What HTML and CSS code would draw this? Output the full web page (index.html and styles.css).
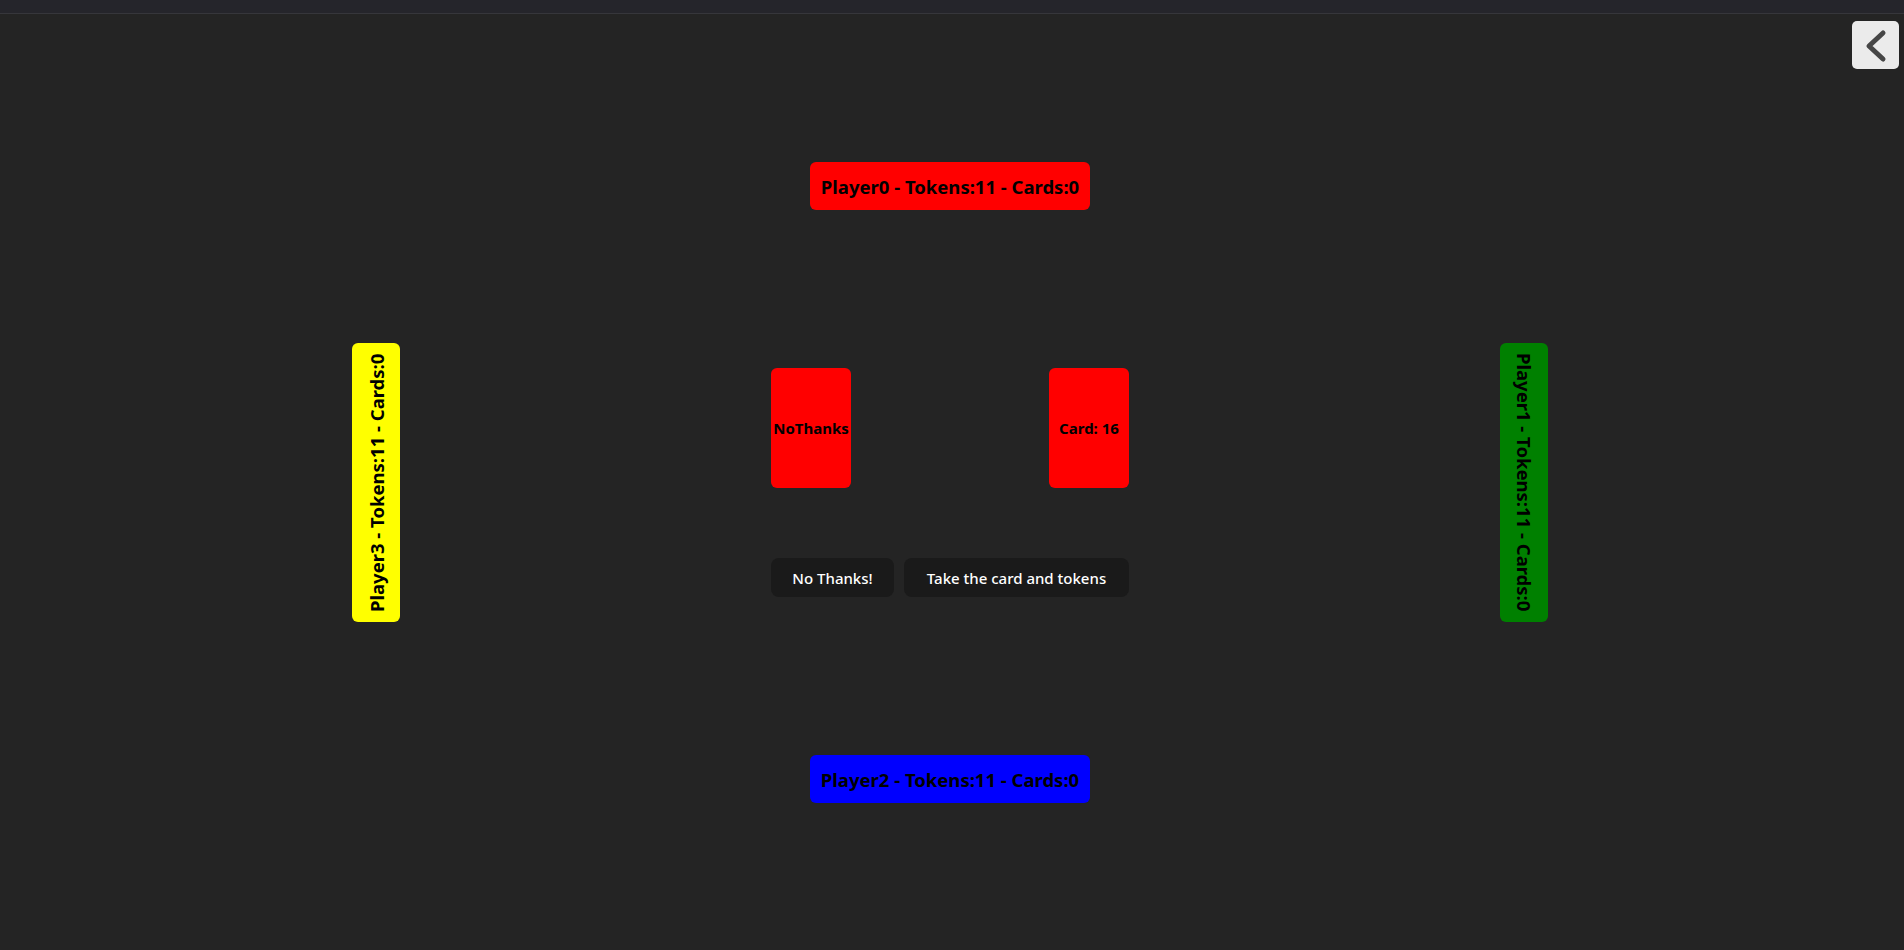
FILE: index.html
```html
<!DOCTYPE html>
<html lang="en">
<head>
<meta charset="utf-8">
<title>NoThanks</title>
<link rel="stylesheet" href="styles.css">
</head>
<body>
<div class="topbar"></div>
<button class="back-btn" aria-label="Back">
  <svg width="47" height="48" viewBox="0 0 47 48"><path d="M31 12 L17 25 L31 38" fill="none" stroke="#464646" stroke-width="5" stroke-linecap="round" stroke-linejoin="round"/></svg>
</button>
<main class="board">
  <div class="player player-h red">Player0 - Tokens:11 - Cards:0</div>
  <div class="middle">
    <div class="player player-v player-up yellow">Player3 - Tokens:11 - Cards:0</div>
    <div class="center">
      <div class="cards">
        <div class="card">NoThanks</div>
        <div class="card">Card: 16</div>
      </div>
      <div class="actions">
        <button class="action action-pass">No Thanks!</button>
        <button class="action action-take">Take the card and tokens</button>
      </div>
    </div>
    <div class="player player-v player-down green">Player1 - Tokens:11 - Cards:0</div>
  </div>
  <div class="player player-h blue">Player2 - Tokens:11 - Cards:0</div>
</main>
</body>
</html>
```
FILE: styles.css
```css
* { box-sizing: border-box; }
html, body {
  margin: 0;
  background: #242424;
  height: 100%;
  overflow: hidden;
}
body {
  font-family: "Noto Sans", "Open Sans", sans-serif;
  position: relative;
}
.topbar {
  height: 14px;
  background: #25252b;
  border-bottom: 1px solid #36363b;
}
.back-btn {
  position: absolute;
  top: 21px;
  right: 5px;
  width: 47px;
  height: 48px;
  padding: 0;
  border: none;
  border-radius: 5px;
  background: #ebebeb;
  display: flex;
  align-items: center;
  justify-content: center;
}
.back-btn svg { display: block; }
.board {
  display: flex;
  flex-direction: column;
  align-items: center;
  gap: 133px;
  padding-top: 148px;
  padding-right: 4px;
}
.player {
  color: #000;
  font-weight: 700;
  font-size: 18.5px;
  border-radius: 6px;
  display: flex;
  align-items: center;
  justify-content: center;
  white-space: nowrap;
}
.player-h {
  width: 280px;
  height: 48px;
}
.player-v {
  width: 48px;
  height: 279px;
  writing-mode: vertical-rl;
}
.player-up { transform: rotate(180deg); }
.red { background: #ff0000; }
.yellow { background: #ffff00; }
.green { background: #008000; }
.blue { background: #0000ff; }
.middle {
  display: flex;
  align-items: stretch;
  gap: 371px;
}
.center {
  width: 358px;
  display: flex;
  flex-direction: column;
  justify-content: center;
  gap: 70px;
}
.cards {
  display: flex;
  justify-content: space-between;
}
.card {
  width: 80px;
  height: 120px;
  background: #ff0000;
  border-radius: 6px;
  display: flex;
  align-items: center;
  justify-content: center;
  color: #000;
  font-weight: 700;
  font-size: 15px;
  white-space: nowrap;
}
.actions {
  display: flex;
  gap: 10px;
}
.action {
  height: 39px;
  border: none;
  border-radius: 8px;
  background: #1a1a1a;
  color: #fff;
  font-family: "Noto Sans", "Open Sans", sans-serif;
  font-size: 15px;
  font-weight: 500;
  padding: 0;
}
.action-pass { width: 123px; }
.action-take { width: 225px; }
```
